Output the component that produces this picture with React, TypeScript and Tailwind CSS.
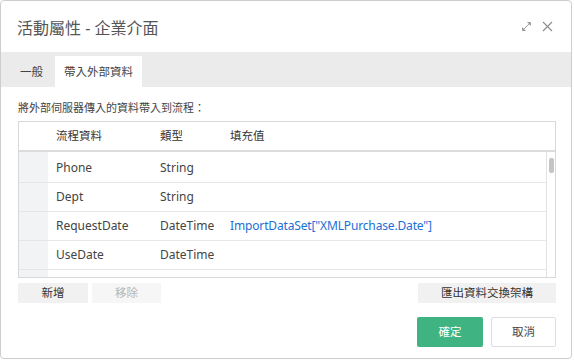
import React from "react";

const cjk = '"Noto Sans", "Noto Sans CJK TC", sans-serif';

type Row = { name: string; type: string; value?: string };

const rows: Row[] = [
  { name: "Phone", type: "String" },
  { name: "Dept", type: "String" },
  { name: "RequestDate", type: "DateTime", value: 'ImportDataSet["XMLPurchase.Date"]' },
  { name: "UseDate", type: "DateTime" },
];

function ExpandIcon() {
  return (
    <svg width="11" height="11" viewBox="0 0 11 11" fill="none" stroke="#9a9a9a" strokeWidth="1">
      <path d="M2 9 L9 2" />
      <path d="M6.5 1.5 H9.5 V4.5" fill="#9a9a9a" />
      <path d="M1.5 6.5 V9.5 H4.5" fill="#9a9a9a" />
    </svg>
  );
}

function CloseIcon() {
  return (
    <svg width="11" height="11" viewBox="0 0 11 11" fill="none" stroke="#8c8c8c" strokeWidth="1.1">
      <path d="M1 1 L10 10 M10 1 L1 10" />
    </svg>
  );
}

export default function App() {
  return (
    <div className="h-[361px] w-[574px] bg-white" style={{ fontFamily: cjk }}>
      <div className="flex h-[359px] w-[572px] flex-col rounded-[4px] border border-[#cdcdcd] bg-white">
        {/* header */}
        <div className="flex h-[51px] shrink-0 items-center justify-between pl-[16px] pr-[18px]">
          <h1 className="pt-[2px] text-[16px] font-normal text-[#555]">活動屬性 - 企業介面</h1>
          <div className="flex items-center gap-[10px]">
            <ExpandIcon />
            <CloseIcon />
          </div>
        </div>

        {/* tabs */}
        <div className="flex h-[35px] shrink-0 items-end bg-[#ebebeb] pl-[19px]">
          <div className="flex h-[31px] items-center pr-[12px] text-[11.5px] text-[#444]">一般</div>
          <div className="flex h-[31px] w-[87px] items-center justify-center bg-white text-[11.5px] text-[#444]">
            帶入外部資料
          </div>
        </div>

        {/* body */}
        <div className="flex flex-1 flex-col pl-[17px] pr-[15px]">
          <p className="mt-[13px] text-[11px] leading-[16px] text-[#444]">將外部伺服器傳入的資料帶入到流程：</p>

          <div className="mt-[5px] flex h-[157px] flex-col border border-[#d8d8d8]">
            <div className="flex h-[30px] shrink-0 items-center border-b-2 border-[#dcdcdc] text-[11.5px] text-[#333]">
              <div className="w-[37px]" />
              <div className="w-[104px]">流程資料</div>
              <div className="w-[70px]">類型</div>
              <div>填充值</div>
            </div>
            <div className="flex min-h-0 flex-1">
              <div className="flex min-w-0 flex-1 flex-col overflow-hidden">
                <div className="h-[2px] w-[29px] shrink-0 bg-[#f2f3f5]" />
                {rows.map((r) => (
                  <div key={r.name} className="flex h-[29px] shrink-0 border-b border-[#e6e6e6] text-[12px] text-[#444]">
                    <div className="w-[29px] bg-[#f2f3f5]" />
                    <div className="flex w-[112px] items-center pl-[8px]">{r.name}</div>
                    <div className="flex w-[70px] items-center">{r.type}</div>
                    <div className="flex items-center tracking-[-0.15px] text-[#1a6fd6]">{r.value}</div>
                  </div>
                ))}
                <div className="flex flex-1">
                  <div className="w-[29px] bg-[#f2f3f5]" />
                </div>
              </div>
              <div className="w-[9px] shrink-0 border-l border-[#e2e2e2] pt-[6px]">
                <div className="mx-auto h-[15px] w-[5px] rounded-[2px] bg-[#c4c4c4]" />
              </div>
            </div>
          </div>

          <div className="mt-[5px] flex items-center justify-between">
            <div className="flex gap-[4px]">
              <button className="h-[20px] w-[70px] bg-[#f1f1f1] text-[11.5px] text-[#333]">新增</button>
              <button className="h-[20px] w-[69px] bg-[#f6f6f6] text-[11.5px] text-[#b5b5b5]">移除</button>
            </div>
            <button className="h-[20px] w-[138px] bg-[#f1f1f1] text-[11.5px] text-[#333]">匯出資料交換架構</button>
          </div>

          <div className="mt-[14px] flex justify-end gap-[8px]">
            <button className="h-[30px] w-[66px] rounded-[2px] bg-[#40b383] text-[11.5px] text-white">確定</button>
            <button className="h-[30px] w-[65px] rounded-[2px] border border-[#dddddd] bg-white text-[11.5px] text-[#444]">
              取消
            </button>
          </div>
        </div>
      </div>
    </div>
  );
}
